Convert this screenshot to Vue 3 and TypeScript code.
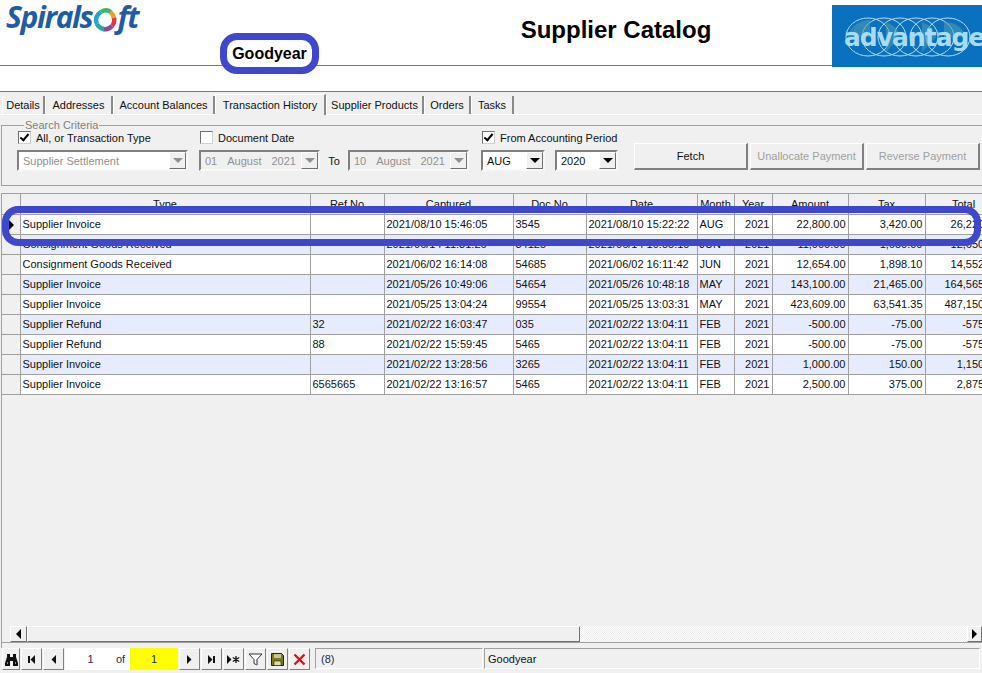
<template>
  <div class="app">
    <!-- Header -->
    <header class="head">
      <div class="brand">
        <span class="brand-word">Spirals</span>
        <svg class="brand-ring" width="24" height="26" viewBox="0 0 24 26">
          <path d="M4 17A9 9 0 0 1 8 5" fill="none" stroke="#2a9fd0" stroke-width="4.5" />
          <path d="M8 5A9 9 0 0 1 18 5" fill="none" stroke="#3fb56a" stroke-width="4.5" />
          <path d="M17 5A9 9 0 0 1 21 12" fill="none" stroke="#f0a020" stroke-width="4.5" />
          <path d="M21 11A9 9 0 0 1 19 19" fill="none" stroke="#e0354f" stroke-width="4.5" />
          <path d="M19 19A9 9 0 0 1 10 22" fill="none" stroke="#8a4a9f" stroke-width="4.5" />
          <path d="M11 22A9 9 0 0 1 4 17" fill="none" stroke="#2aa7a0" stroke-width="4.5" />
        </svg>
        <span class="brand-word">ft</span>
      </div>
      <h1 class="title">Supplier Catalog</h1>
      <div class="adv">
        <svg class="adv-coils" width="134" height="42" viewBox="0 0 134 42">
          <g fill="none" stroke="#b5dcec" stroke-width="1">
            <ellipse v-for="c in coils" :key="c" :cx="c" cy="21" rx="22" ry="19" />
          </g>
          <g fill="#4f9fb0" opacity="0.55">
            <path d="M8 21A22 19 0 0 1 30 4L30 21Z" />
            <path d="M46 6A22 19 0 0 1 60 21L46 36Z" />
            <path d="M82 6A22 19 0 0 1 96 21L82 36Z" />
            <path d="M104 6A22 19 0 0 1 126 21L104 21Z" />
          </g>
        </svg>
        <span class="adv-text">advantage</span>
      </div>
    </header>
    <div class="spacer"></div>

    <!-- Tabs -->
    <nav class="tabs">
      <span
        v-for="t in tabs"
        :key="t.label"
        class="tab"
        :class="{ active: t.active }"
        :style="{ width: t.width + 'px' }"
        >{{ t.label }}</span
      >
    </nav>

    <!-- Search criteria -->
    <fieldset class="criteria">
      <legend>Search Criteria</legend>
      <div class="col col-type">
        <label class="check"><span class="box on"></span>All, or Transaction Type</label>
        <div class="combo off wide">
          <span>Supplier Settlement</span><i class="drop"></i>
        </div>
      </div>
      <div class="col col-date">
        <label class="check"><span class="box"></span>Document Date</label>
        <div class="date-row">
          <div class="combo off date">
            <span class="date-text"><b>01</b><b>August</b><b>2021</b></span><i class="drop"></i>
          </div>
          <span class="to">To</span>
          <div class="combo off date">
            <span class="date-text"><b>10</b><b>August</b><b>2021</b></span><i class="drop"></i>
          </div>
        </div>
      </div>
      <div class="col col-period">
        <label class="check"><span class="box on"></span>From Accounting Period</label>
        <div class="date-row period-row">
          <div class="combo month"><span>AUG</span><i class="drop"></i></div>
          <div class="combo year"><span>2020</span><i class="drop"></i></div>
        </div>
      </div>
      <div class="actions">
        <button class="btn fetch">Fetch</button>
        <button class="btn" disabled>Unallocate Payment</button>
        <button class="btn" disabled>Reverse Payment</button>
      </div>
    </fieldset>

    <!-- Grid -->
    <section class="grid">
      <table>
        <colgroup>
          <col v-for="(w, i) in colWidths" :key="i" :width="w" />
        </colgroup>
        <thead>
          <tr>
            <th></th>
            <th v-for="h in headers" :key="h">{{ h }}</th>
          </tr>
        </thead>
        <tbody>
          <tr v-for="(r, i) in rows" :key="i" :class="{ alt: i % 2 === 1 }">
            <td class="ind"><span v-if="i === 0" class="pointer"></span></td>
            <td>{{ r[0] }}</td>
            <td>{{ r[1] }}</td>
            <td>{{ r[2] }}</td>
            <td>{{ r[3] }}</td>
            <td>{{ r[4] }}</td>
            <td>{{ r[5] }}</td>
            <td class="num">2021</td>
            <td class="num">{{ r[6] }}</td>
            <td class="num">{{ r[7] }}</td>
            <td class="num">{{ r[8] }}</td>
          </tr>
        </tbody>
      </table>
      <div class="fill"></div>
      <div class="hscroll">
        <span class="sb-gap"></span>
        <span class="sb-btn"><i class="tri left"></i></span>
        <span class="sb-thumb"></span>
        <span class="sb-track"></span>
        <span class="sb-btn end"><i class="tri right"></i></span>
      </div>
    </section>

    <!-- Record navigator -->
    <footer class="nav">
      <span class="nb nb-find">
        <svg width="15" height="13" viewBox="0 0 15 13">
          <path d="M3 1h3v3h3V1h3v3l2 6v3H9V8H6v5H1v-3l2-6z" fill="#111" />
          <path d="M3 10h1M11 10h1" stroke="#fff" />
        </svg>
      </span>
      <span class="nb"><svg width="9" height="9" viewBox="0 0 9 9"><path d="M1 1h2v7H1zM8 0v9L3.5 4.5z" fill="#111" /></svg></span>
      <span class="nb"><svg width="9" height="9" viewBox="0 0 9 9"><path d="M7 0v9L2.500 4.500z" fill="#111" /></svg></span>
      <span class="pos">1</span>
      <span class="of">of</span>
      <span class="count">1</span>
      <span class="nb"><svg width="9" height="9" viewBox="0 0 9 9"><path d="M2 0v9L6.500 4.500z" fill="#111" /></svg></span>
      <span class="nb"><svg width="9" height="9" viewBox="0 0 9 9"><path d="M6 1h2v7H6zM1 0v9l4.500-4.500z" fill="#111" /></svg></span>
      <span class="nb nb-new">
        <svg width="13" height="9" viewBox="0 0 13 9">
          <path d="M0 0v9L4.500 4.500z" fill="#111" />
          <path d="M9 1v7M5.800 2.500l6.400 4M12.200 2.500l-6.400 4" stroke="#111" stroke-width="1.300" />
        </svg>
      </span>
      <span class="nb">
        <svg width="15" height="13" viewBox="0 0 15 13">
          <path d="M1 1h13L9 6.500V12L6 10.500v-4z" fill="#fff" stroke="#333" />
          <path d="M9 6.500V12" stroke="#888" />
        </svg>
      </span>
      <span class="nb">
        <svg width="13" height="13" viewBox="0 0 13 13">
          <path d="M.5.5h10l2 2v10H.5z" fill="#7d7a1e" stroke="#222" />
          <path d="M3 1h7v4H3z" fill="#c8c68a" />
          <path d="M3 8h7v4.500H3z" fill="#dcdcb0" stroke="#222" stroke-width=".6" />
        </svg>
      </span>
      <span class="nb">
        <svg width="13" height="13" viewBox="0 0 13 13">
          <path d="M1.500 1.500l10 10M11.500 1.500l-10 10" stroke="#e01010" stroke-width="2.400" />
        </svg>
      </span>
      <span class="panel count-panel">(8)</span>
      <span class="panel name-panel">Goodyear</span>
    </footer>

    <!-- Hand-drawn annotations on the screenshot -->
    <div class="mark mark-name">Goodyear</div>
    <div class="mark mark-row"></div>
  </div>
</template>

<script setup lang="ts">
const coils = [28, 44, 60, 76, 92, 108];

const tabs = [
  { label: "Details", width: 43 },
  { label: "Addresses", width: 68 },
  { label: "Account Balances", width: 102 },
  { label: "Transaction History", width: 111, active: true },
  { label: "Supplier Products", width: 98 },
  { label: "Orders", width: 47 },
  { label: "Tasks", width: 43 },
];

const colWidths = [18, 290, 74, 129, 73, 111, 37, 38, 76, 77, 77];

const headers = [
  "Type",
  "Ref No",
  "Captured",
  "Doc No",
  "Date",
  "Month",
  "Year",
  "Amount",
  "Tax",
  "Total",
];

const rows: string[][] = [
  ["Supplier Invoice", "", "2021/08/10 15:46:05", "3545", "2021/08/10 15:22:22", "AUG", "22,800.00", "3,420.00", "26,220.00"],
  ["Consignment Goods Received", "", "2021/06/14 11:31:26", "34125", "2021/06/14 10:55:10", "JUN", "11,000.00", "1,650.00", "12,650.00"],
  ["Consignment Goods Received", "", "2021/06/02 16:14:08", "54685", "2021/06/02 16:11:42", "JUN", "12,654.00", "1,898.10", "14,552.10"],
  ["Supplier Invoice", "", "2021/05/26 10:49:06", "54654", "2021/05/26 10:48:18", "MAY", "143,100.00", "21,465.00", "164,565.00"],
  ["Supplier Invoice", "", "2021/05/25 13:04:24", "99554", "2021/05/25 13:03:31", "MAY", "423,609.00", "63,541.35", "487,150.35"],
  ["Supplier Refund", "32", "2021/02/22 16:03:47", "035", "2021/02/22 13:04:11", "FEB", "-500.00", "-75.00", "-575.00"],
  ["Supplier Refund", "88", "2021/02/22 15:59:45", "5465", "2021/02/22 13:04:11", "FEB", "-500.00", "-75.00", "-575.00"],
  ["Supplier Invoice", "", "2021/02/22 13:28:56", "3265", "2021/02/22 13:04:11", "FEB", "1,000.00", "150.00", "1,150.00"],
  ["Supplier Invoice", "6565665", "2021/02/22 13:16:57", "5465", "2021/02/22 13:04:11", "FEB", "2,500.00", "375.00", "2,875.00"],
];
</script>

<style>
body {
  margin: 0;
  overflow: hidden;
}
</style>

<style scoped>
.app {
  position: relative;
  width: 982px;
  height: 673px;
  overflow: hidden;
  display: flex;
  flex-direction: column;
  background: #f0f0f0;
  color: #111;
  font: 11px "Liberation Sans", Arial, sans-serif;
}

/* ── Header ── */
.head {
  flex: none;
  height: 66px;
  box-sizing: border-box;
  display: flex;
  align-items: flex-start;
  background: #fff;
  border-bottom: 1px solid #00a2e8;
}
.brand {
  width: 400px;
  box-sizing: border-box;
  padding: 0 0 0 6px;
  display: flex;
  align-items: center;
  height: 34px;
  color: #1f5ca8;
}
.brand-word {
  font: italic 700 30px/34px "Open Sans", sans-serif;
  letter-spacing: -1.4px;
}
.brand-ring {
  margin: 5px 0 0 1px;
}
.title {
  width: 432px;
  margin: 15px 0 0;
  text-align: center;
  font: 700 24px/30px "Liberation Sans", Arial, sans-serif;
  color: #000;
}
.adv {
  position: relative;
  width: 150px;
  height: 62px;
  margin-top: 5px;
  background: #0a70c0;
  overflow: hidden;
}
.adv-coils {
  position: absolute;
  left: 8px;
  top: 11px;
}
.adv-text {
  position: absolute;
  left: 12px;
  top: 18px;
  font: 700 25px/30px "DejaVu Sans", sans-serif;
  letter-spacing: -1px;
  color: #a8dcf4;
}
.spacer {
  flex: none;
  height: 25px;
  background: #fff;
  border-bottom: 1px solid #00a2e8;
}

/* ── Tabs ── */
.tabs {
  flex: none;
  height: 23px;
  box-sizing: border-box;
  padding-left: 2px;
  display: flex;
  align-items: flex-end;
  border-bottom: 1px solid #fff;
}
.tab {
  height: 18px;
  box-sizing: border-box;
  text-align: center;
  line-height: 18px;
  border-left: 1px solid #fff;
  border-right: 2px solid #8a8a8a;
  white-space: nowrap;
}
.tab.active {
  height: 21px;
  line-height: 20px;
  background: #f0f0f0;
  border-top: 1px solid #fff;
  position: relative;
  top: 1px;
}

/* ── Search criteria ── */
.criteria {
  flex: none;
  height: 67px;
  box-sizing: border-box;
  margin: 4px 0 0 1px;
  min-width: 0;
  padding: 0 0 8px 15px;
  display: flex;
  align-items: flex-end;
  border: 1px solid #a0a0a0;
  border-right: none;
}
.criteria legend {
  margin-left: 7px;
  padding: 0 1px;
  color: #808080;
  line-height: 12px;
}
.col {
  display: flex;
  flex-direction: column;
  gap: 6px;
}
.col-type {
  width: 171px;
}
.col-date {
  margin-left: 11px;
}
.col-period {
  margin-left: 12px;
}
.check {
  display: flex;
  align-items: center;
  gap: 5px;
  height: 13px;
  padding-left: 1px;
  white-space: nowrap;
}
.box {
  position: relative;
  width: 13px;
  height: 13px;
  box-sizing: border-box;
  background: #fff;
  border: 1px solid #707070;
  border-right-color: #d0d0d0;
  border-bottom-color: #d0d0d0;
}
.box.on::after {
  content: "";
  position: absolute;
  left: 3px;
  top: 0;
  width: 3px;
  height: 7px;
  border: solid #000;
  border-width: 0 2px 2px 0;
  transform: rotate(40deg);
}
.combo {
  height: 21px;
  box-sizing: border-box;
  display: flex;
  align-items: center;
  justify-content: space-between;
  padding: 0 0 0 4px;
  background: #fff;
  border: 2px solid #808080;
  border-right-color: #f8f8f8;
  border-bottom-color: #f8f8f8;
  white-space: nowrap;
}
.combo.off {
  color: #909090;
}
.combo.date {
  width: 121px;
  background: #f0f0f0;
}
.wide {
  width: 171px;
}
.date-text {
  display: flex;
  gap: 10px;
}
.date-text b {
  font-weight: 400;
}
.drop {
  position: relative;
  flex: none;
  width: 17px;
  height: 17px;
  box-sizing: border-box;
  background: #f0f0f0;
  border: 1px solid #fff;
  border-right: 1px solid #707070;
  border-bottom: 1px solid #707070;
}
.drop::after {
  content: "";
  position: absolute;
  left: 3px;
  top: 5px;
  border: 5px solid transparent;
  border-top: 5px solid #000;
  border-bottom: none;
}
.combo.off .drop::after {
  border-top-color: #909090;
}
.date-row {
  display: flex;
  align-items: center;
}
.to {
  width: 28px;
  text-align: center;
}
.period-row {
  gap: 10px;
}
.month {
  width: 64px;
}
.year {
  width: 63px;
}
.actions {
  display: flex;
  gap: 2px;
  margin-left: 16px;
  padding-bottom: 1px;
}
.btn {
  width: 114px;
  height: 27px;
  box-sizing: border-box;
  padding: 0;
  background: #f0f0f0;
  border: 1px solid #fff;
  border-right: 2px solid #808080;
  border-bottom: 2px solid #808080;
  font: inherit;
  color: #111;
}
.btn:disabled {
  color: #a0a0a0;
}

/* ── Grid ── */
.grid {
  flex: 1;
  min-height: 0;
  margin: 7px 0 0 1px;
  display: flex;
  flex-direction: column;
  border-left: 1px solid #a0a0a0;
  border-top: 1px solid #a0a0a0;
  overflow: hidden;
}
table {
  flex: none;
  width: 1000px;
  table-layout: fixed;
  border-collapse: collapse;
}
th,
td {
  height: 20px;
  padding: 0 2px;
  box-sizing: border-box;
  border-right: 1px solid #a0a0a0;
  border-bottom: 1px solid #a0a0a0;
  white-space: nowrap;
  overflow: hidden;
  font-weight: 400;
  background: #fff;
}
th {
  background: #f0f0f0;
  text-align: center;
}
tr.alt td {
  background: #e6ecfb;
}
td.ind,
tr.alt td.ind {
  position: relative;
  background: #f0f0f0;
}
.num {
  text-align: right;
}
.pointer {
  position: absolute;
  left: 7px;
  top: 5px;
  border: 5px solid transparent;
  border-left: 5px solid #000;
  border-right: none;
}
.fill {
  flex: 1;
}
.hscroll {
  flex: none;
  height: 16px;
  margin-bottom: 5px;
  display: flex;
  border-bottom: 1px solid #a0a0a0;
}
.sb-gap {
  width: 8px;
}
.sb-btn {
  width: 17px;
  display: flex;
  align-items: center;
  justify-content: center;
  box-sizing: border-box;
  background: #f0f0f0;
  border: 1px solid #fff;
  border-right: 1px solid #707070;
  border-bottom: 1px solid #707070;
}
.sb-btn.end {
  width: 15px;
}
.sb-thumb {
  width: 553px;
  box-sizing: border-box;
  background: #f0f0f0;
  border: 1px solid #fff;
  border-right: 1px solid #707070;
  border-bottom: 1px solid #707070;
}
.sb-track {
  flex: 1;
  background: repeating-conic-gradient(#fff 0 25%, #ececec 0 50%) 0 0 / 2px 2px;
}
.tri {
  width: 0;
  height: 0;
  border: 5px solid transparent;
}
.tri.left {
  border-left: none;
  border-right-color: #000;
}
.tri.right {
  border-right: none;
  border-left-color: #000;
}

/* ── Record navigator ── */
.nav {
  flex: none;
  height: 22px;
  margin-bottom: 3px;
  padding-left: 2px;
  display: flex;
  align-items: stretch;
}
.nb {
  flex: none;
  width: 21px;
  margin-right: 1px;
  box-sizing: border-box;
  display: flex;
  align-items: center;
  justify-content: center;
  background: #f0f0f0;
  border: 1px solid #fff;
  border-right: 1px solid #808080;
  border-bottom: 1px solid #808080;
}
.nb-find {
  width: 18px;
}
.pos {
  flex: none;
  width: 51px;
  box-sizing: border-box;
  padding-right: 0;
  background: #fff;
  text-align: center;
  line-height: 22px;
  color: #1a2a50;
}
.of {
  flex: none;
  width: 14px;
  box-sizing: border-box;
  background: #fff;
  line-height: 22px;
  color: #1a2a50;
}
.count {
  flex: none;
  width: 48px;
  margin-right: 1px;
  background: #ff0;
  text-align: center;
  line-height: 22px;
  color: #1a2a50;
}
.panel {
  box-sizing: border-box;
  height: 21px;
  line-height: 20px;
  padding-left: 5px;
  border: 1px solid #a0a0a0;
  border-right-color: #fff;
  border-bottom-color: #fff;
}
.count-panel {
  flex: none;
  width: 168px;
  margin: 0 1px 0 4px;
  color: #1a2a50;
}
.name-panel {
  flex: 1;
  padding-left: 3px;
  margin-right: 2px;
}

/* ── Annotations ── */
.mark {
  position: absolute;
  box-sizing: border-box;
  border: 7px solid #3f48cc;
}
.mark-name {
  left: 220px;
  top: 33px;
  width: 99px;
  height: 41px;
  border-radius: 17px;
  background: #fff;
  text-align: center;
  font: 700 16px/27px "Liberation Sans", Arial, sans-serif;
  color: #000;
}
.mark-row {
  left: 2px;
  top: 206px;
  width: 979px;
  height: 40px;
  border-radius: 16px;
}
</style>
